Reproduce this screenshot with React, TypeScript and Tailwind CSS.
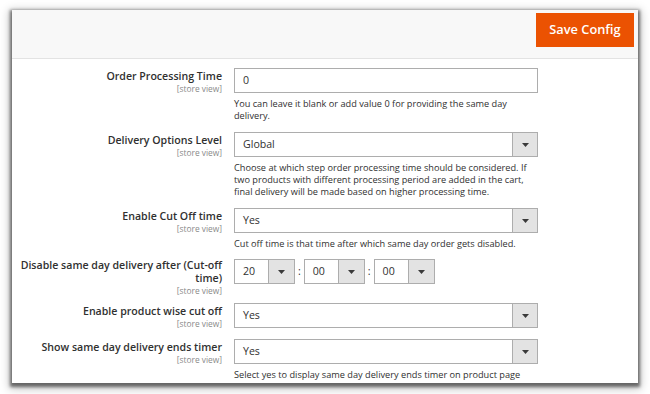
import React from "react";

const Arrow = () => (
  <svg width="7" height="4" viewBox="0 0 7 4">
    <path d="M0 0H7L3.5 4Z" fill="#3a3a3a" />
  </svg>
);

function Select({ value }: { value: string }) {
  return (
    <div className="flex h-[25px] w-[304px] border border-[#adadad] bg-white">
      <div className="flex-1 pl-[8px] text-[10.6px] leading-[23px] text-[#303030]">{value}</div>
      <div className="flex w-[25px] items-center justify-center border-l border-[#adadad] bg-[#e3e3e3]">
        <Arrow />
      </div>
    </div>
  );
}

function TimeSelect({ value }: { value: string }) {
  return (
    <div className="flex h-[25px] w-[61px] border border-[#adadad] bg-white">
      <div className="flex-1 pl-[8px] text-[10.6px] leading-[23px] text-[#303030]">{value}</div>
      <div className="flex w-[26px] items-center justify-center border-l border-[#adadad] bg-[#e3e3e3]">
        <Arrow />
      </div>
    </div>
  );
}

function Row({
  label,
  note,
  children,
  labelPt = "pt-[2px]",
  pb = "pb-[10px]",
}: {
  label: string;
  note?: React.ReactNode;
  children: React.ReactNode;
  labelPt?: string;
  pb?: string;
}) {
  return (
    <div className={`flex ${pb}`}>
      <div className={`w-[210px] pl-[6px] text-right ${labelPt}`}>
        <div className="text-[10.6px] font-semibold leading-[13px] text-[#303030]">{label}</div>
        <div className="text-[8.4px] leading-[11px] text-[#8a8a8a]">[store view]</div>
      </div>
      <div className="ml-[12px] w-[304px]">
        {children}
        {note && <div className="mt-[5px] text-[9.2px] leading-[12px] text-[#303030]">{note}</div>}
      </div>
    </div>
  );
}

export default function App() {
  return (
    <div className="h-[394px] w-[650px] bg-white pl-[12px] pt-[10px] font-['Open_Sans','Noto_Sans',sans-serif]">
      <div className="h-[373px] w-[626px] overflow-hidden bg-white shadow-[0_2px_3px_2px_rgba(0,0,0,0.5),0_3px_9px_3px_rgba(0,0,0,0.22)]">
        <div className="flex h-[49px] justify-end border-b border-[#e3e3e3] bg-[#f8f8f8] pr-[4px] pt-[3px]">
          <button className="h-[34px] w-[98px] bg-[#eb5202] text-[12.8px] font-semibold text-white">
            Save Config
          </button>
        </div>
        <div className="pt-[9px]">
          <Row
            label="Order Processing Time"
            note="You can leave it blank or add value 0 for providing the same day delivery."
          >
            <div className="h-[25px] w-[304px] border border-[#adadad] bg-white pl-[8px] text-[10.6px] leading-[23px] text-[#303030]">
              0
            </div>
          </Row>
          <Row
            label="Delivery Options Level"
            note="Choose at which step order processing time should be considered. If two products with different processing period are added in the cart, final delivery will be made based on higher processing time."
          >
            <Select value="Global" />
          </Row>
          <Row
            label="Enable Cut Off time"
            note="Cut off time is that time after which same day order gets disabled."
            pb="pb-[9px]"
          >
            <Select value="Yes" />
          </Row>
          <Row label="Disable same day delivery after (Cut-off time)" labelPt="pt-0" pb="pb-[7px]">
            <div className="flex items-center">
              <TimeSelect value="20" />
              <span className="mx-[3px] text-[10.6px] text-[#303030]">:</span>
              <TimeSelect value="00" />
              <span className="mx-[3px] text-[10.6px] text-[#303030]">:</span>
              <TimeSelect value="00" />
            </div>
          </Row>
          <Row label="Enable product wise cut off">
            <Select value="Yes" />
          </Row>
          <Row
            label="Show same day delivery ends timer"
            note="Select yes to display same day delivery ends timer on product page"
          >
            <Select value="Yes" />
          </Row>
        </div>
      </div>
    </div>
  );
}
